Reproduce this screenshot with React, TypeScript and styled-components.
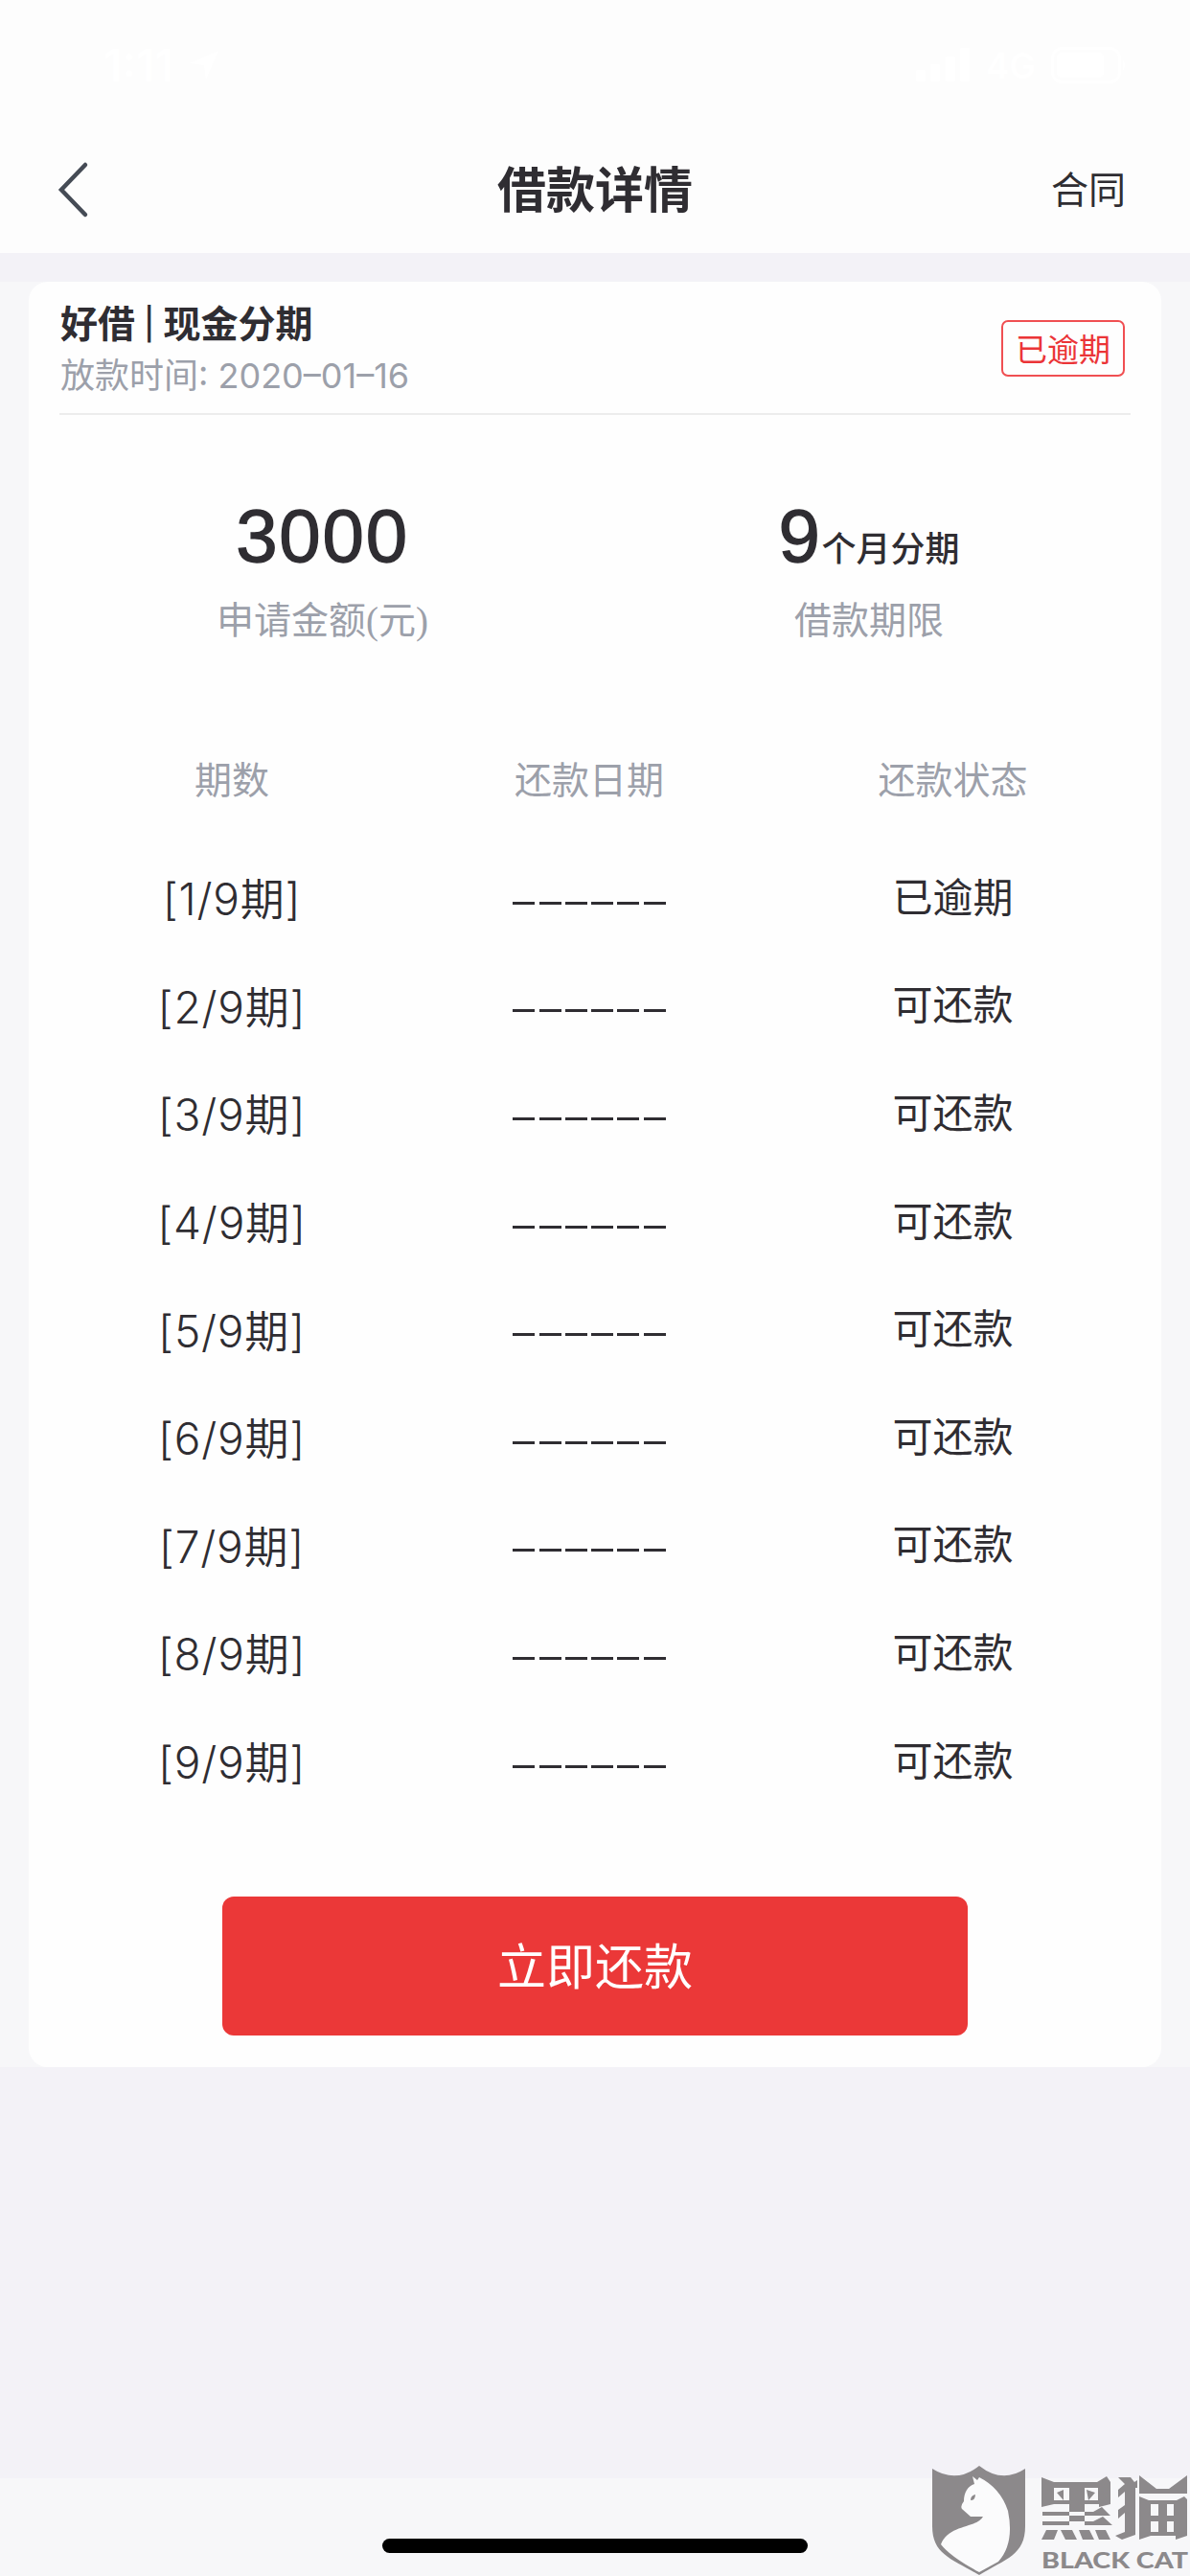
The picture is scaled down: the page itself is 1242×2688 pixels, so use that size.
import styled, { createGlobalStyle } from "styled-components";

const GlobalStyle = createGlobalStyle`
  * {
    box-sizing: border-box;
  }

  body {
    margin: 0;
    background-color: #f3f2f7;
    color: #2f2d32;
    font-family: "Inter", "Noto Sans CJK SC", sans-serif;
  }
`;

const Page = styled.div`
  width: 1242px;
  height: 2688px;
  display: flex;
  flex-direction: column;
  overflow: hidden;
`;

const StatusBar = styled.div`
  height: 132px;
  padding: 4px 66px 0 108px;
  display: flex;
  align-items: center;
  justify-content: space-between;
  background-color: #fdfdfd;
  color: white;
  font-size: 46px;
  font-weight: 600;
`;

const StatusGroup = styled.div`
  display: flex;
  align-items: center;
  gap: 16px;
`;

const Network = styled.span`
  font-size: 37px;
`;

const NavBar = styled.div`
  height: 132px;
  padding: 0 60px;
  display: grid;
  grid-template-columns: 1fr auto 1fr;
  align-items: center;
  background-color: #fdfdfd;
`;

const NavTitle = styled.h1`
  margin: 0;
  font-size: 51px;
  font-weight: 700;
  line-height: 1;
`;

const NavLink = styled.span`
  justify-self: end;
  padding-bottom: 1px;
  margin-right: 7px;
  font-size: 39px;
  line-height: 1;
`;

const Content = styled.div`
  margin-top: 30px;
  padding: 0 30px;
  background-color: #f7f7f9;
`;

const Card = styled.div`
  height: 1863px;
  padding: 0 32px;
  display: flex;
  flex-direction: column;
  background-color: #fefefe;
  border-radius: 20px;
`;

const CardHeader = styled.div`
  height: 139px;
  padding: 2px 6px 0 1px;
  display: flex;
  align-items: center;
  justify-content: space-between;
  border-bottom: 2px solid #ececec;
`;

const Product = styled.div`
  display: flex;
  align-items: center;
  margin-top: 3px;
  font-size: 39px;
  font-weight: 700;
  line-height: 54px;

  & span {
    margin: 0 9px;
    font-size: 33px;
    font-weight: 500;
  }
`;

const LoanDate = styled.div`
  color: #9ca0aa;
  font-size: 36px;
  line-height: 54px;
`;

const Badge = styled.span`
  height: 59px;
  width: 129px;
  padding-bottom: 2px;
  display: flex;
  align-items: center;
  justify-content: center;
  border: 2px solid #f04f52;
  border-radius: 7px;
  color: #eb3437;
  font-size: 33px;
`;

const Summary = styled.div`
  height: 310px;
  padding-top: 83px;
  display: grid;
  grid-template-columns: 549px 592px;
`;

const SummaryItem = styled.div`
  display: flex;
  flex-direction: column;
  align-items: center;
`;

const Amount = styled.div`
  height: 101px;
  display: flex;
  align-items: baseline;
  font-family: "Liberation Sans", sans-serif;
  font-size: 78px;
  line-height: 86px;
  letter-spacing: 1.8px;
  -webkit-text-stroke: 1.3px #2f2d32;

  & small {
    font-family: "Noto Sans CJK SC", sans-serif;
    font-size: 36px;
    font-weight: 500;
    line-height: 1;
    letter-spacing: 0;
    -webkit-text-stroke: 0;
  }
`;

const Label = styled.div`
  color: #9ca0aa;
  font-size: 39px;
  line-height: 60px;

  & span {
    font-family: "Liberation Serif", serif;
  }
`;

const Row = styled.div`
  height: 112.6px;
  display: grid;
  grid-template-columns: 360px 386px 373px;
  align-items: center;
  justify-items: center;
  font-size: 42px;
`;

const HeadRow = styled(Row)`
  height: 136px;
  color: #9ca0aa;
  font-size: 39px;
`;

const Period = styled.span`
  font-size: 46px;
  font-weight: 350;
  letter-spacing: 0.8px;
`;

const Dashes = styled.span`
  display: flex;
  gap: 4.3px;
  padding-top: 14px;
`;

const Dash = styled.i`
  width: 23px;
  height: 3px;
  background-color: #2f2d32;
`;

const Status = styled.span`
  padding-bottom: 4px;
`;

const PayButton = styled.button`
  width: 778px;
  height: 145px;
  margin: auto auto 33px;
  padding: 0 0 6px;
  border: none;
  border-radius: 12px;
  background-color: #eb3838;
  color: white;
  font-family: inherit;
  font-size: 51px;
`;

const HomeBar = styled.div`
  height: 102px;
  margin-top: auto;
  padding-top: 63px;
  background-color: #f7f7f9;
`;

const HomeIndicator = styled.div`
  width: 444px;
  height: 15px;
  margin: 0 auto;
  border-radius: 8px;
  background-color: black;
`;

const Watermark = styled.div`
  position: absolute;
  left: 972px;
  top: 2572px;
`;

const periods = [1, 2, 3, 4, 5, 6, 7, 8, 9];

const Logo = () => (
  <svg width="270" height="116" viewBox="0 0 270 116" fill="#8c898b">
    <path d="M1 4Q26 20 50 1Q74 20 98 4V64C98 94 78 98 50 115C22 98 1 94 1 64Z" />
    <path
      fill="#fbfbfc"
      d="M43 12L48 16L50 13Q72 24 80 48Q87 82 70 101L50 112Q20 96 10 83C18 62 48 66 54 54H41L32 46Q30 43 34 38C34 29 38 22 45 20Z"
    />
    <path d="M41 37Q41 32 46 31Q46 37 41 37Z" />
    <path
      fillRule="evenodd"
      d="M115 13L128 18H173L183 12L187 18V41L175 44V41H160V49H169L178 44L187 53H116V49H144V41H128L115 44ZM128 24V37H144V24ZM160 24V37H174V24ZM131 29L138 26V37ZM162 26L171 29L164 37ZM116 59H169L179 54L189 63H116ZM144 49H160V63H144ZM120 68H132L128 78H115ZM135 68H147L152 78H140ZM154 68H165L170 78H158ZM171 68H182L187 78H175Z"
    />
    <path
      fillRule="evenodd"
      d="M195 13H208L212 18L215 16V24H213V73L199 78L192 74L202 70V50L195 56V47L202 42V28L195 34V26L202 20ZM217 11L235 25H248L267 11V30H217ZM217 33L227 37H256L264 33L267 36V74L255 78V74H229L217 78ZM229 41V53H237V41ZM246 41V53H253V41ZM229 59V70H237V59ZM246 59V70H253V59Z"
    />
    <text
      x="115"
      y="108"
      textLength="153"
      lengthAdjust="spacingAndGlyphs"
      fontFamily="Lato, sans-serif"
      fontSize="23"
      fontWeight="900"
    >
      BLACK CAT
    </text>
  </svg>
);

const App = () => {
  return (
    <Page>
      <GlobalStyle />
      <StatusBar>
        <StatusGroup>
          <span>1:11</span>
          <svg width="32" height="32" viewBox="0 0 34 34" fill="white">
            <path d="M33 1L19 33L17 17L1 15Z" />
          </svg>
        </StatusGroup>
        <StatusGroup>
          <svg width="57" height="36" viewBox="0 0 57 36" fill="white">
            <rect x="0" y="23" width="10" height="12" rx="2" />
            <rect x="15" y="17" width="10" height="18" rx="2" />
            <rect x="31" y="9" width="10" height="26" rx="2" />
            <rect x="46" y="0" width="10" height="35" rx="2" />
          </svg>
          <Network>4G</Network>
          <svg width="79" height="38" viewBox="0 0 79 38" fill="white">
            <rect
              x="1.5"
              y="1.5"
              width="70"
              height="35"
              rx="10"
              fill="none"
              stroke="white"
              strokeWidth="3"
            />
            <rect x="6" y="6" width="49" height="26" rx="5" />
            <path d="M75 13Q79 19 75 25Z" />
          </svg>
        </StatusGroup>
      </StatusBar>
      <NavBar>
        <svg width="34" height="60" viewBox="0 0 34 60" fill="none">
          <path
            d="M29 4L4 30L29 56"
            stroke="#454b55"
            strokeWidth="4.5"
            strokeLinecap="round"
          />
        </svg>
        <NavTitle>借款详情</NavTitle>
        <NavLink>合同</NavLink>
      </NavBar>
      <Content>
        <Card>
          <CardHeader>
            <div>
              <Product>
                好借<span>|</span>现金分期
              </Product>
              <LoanDate>放款时间: 2020–01–16</LoanDate>
            </div>
            <Badge>已逾期</Badge>
          </CardHeader>
          <Summary>
            <SummaryItem>
              <Amount>3000</Amount>
              <Label>
                申请金额<span>(</span>元<span>)</span>
              </Label>
            </SummaryItem>
            <SummaryItem>
              <Amount>
                9<small>个月分期</small>
              </Amount>
              <Label>借款期限</Label>
            </SummaryItem>
          </Summary>
          <HeadRow>
            <span>期数</span>
            <span>还款日期</span>
            <span>还款状态</span>
          </HeadRow>
          {periods.map((n) => (
            <Row key={n}>
              <Period>[{n}/9期]</Period>
              <Dashes>
                {[0, 1, 2, 3, 4, 5].map((i) => (
                  <Dash key={i} />
                ))}
              </Dashes>
              <Status>{n === 1 ? "已逾期" : "可还款"}</Status>
            </Row>
          ))}
          <PayButton>立即还款</PayButton>
        </Card>
      </Content>
      <HomeBar>
        <HomeIndicator />
      </HomeBar>
      <Watermark>
        <Logo />
      </Watermark>
    </Page>
  );
};

export default App;
